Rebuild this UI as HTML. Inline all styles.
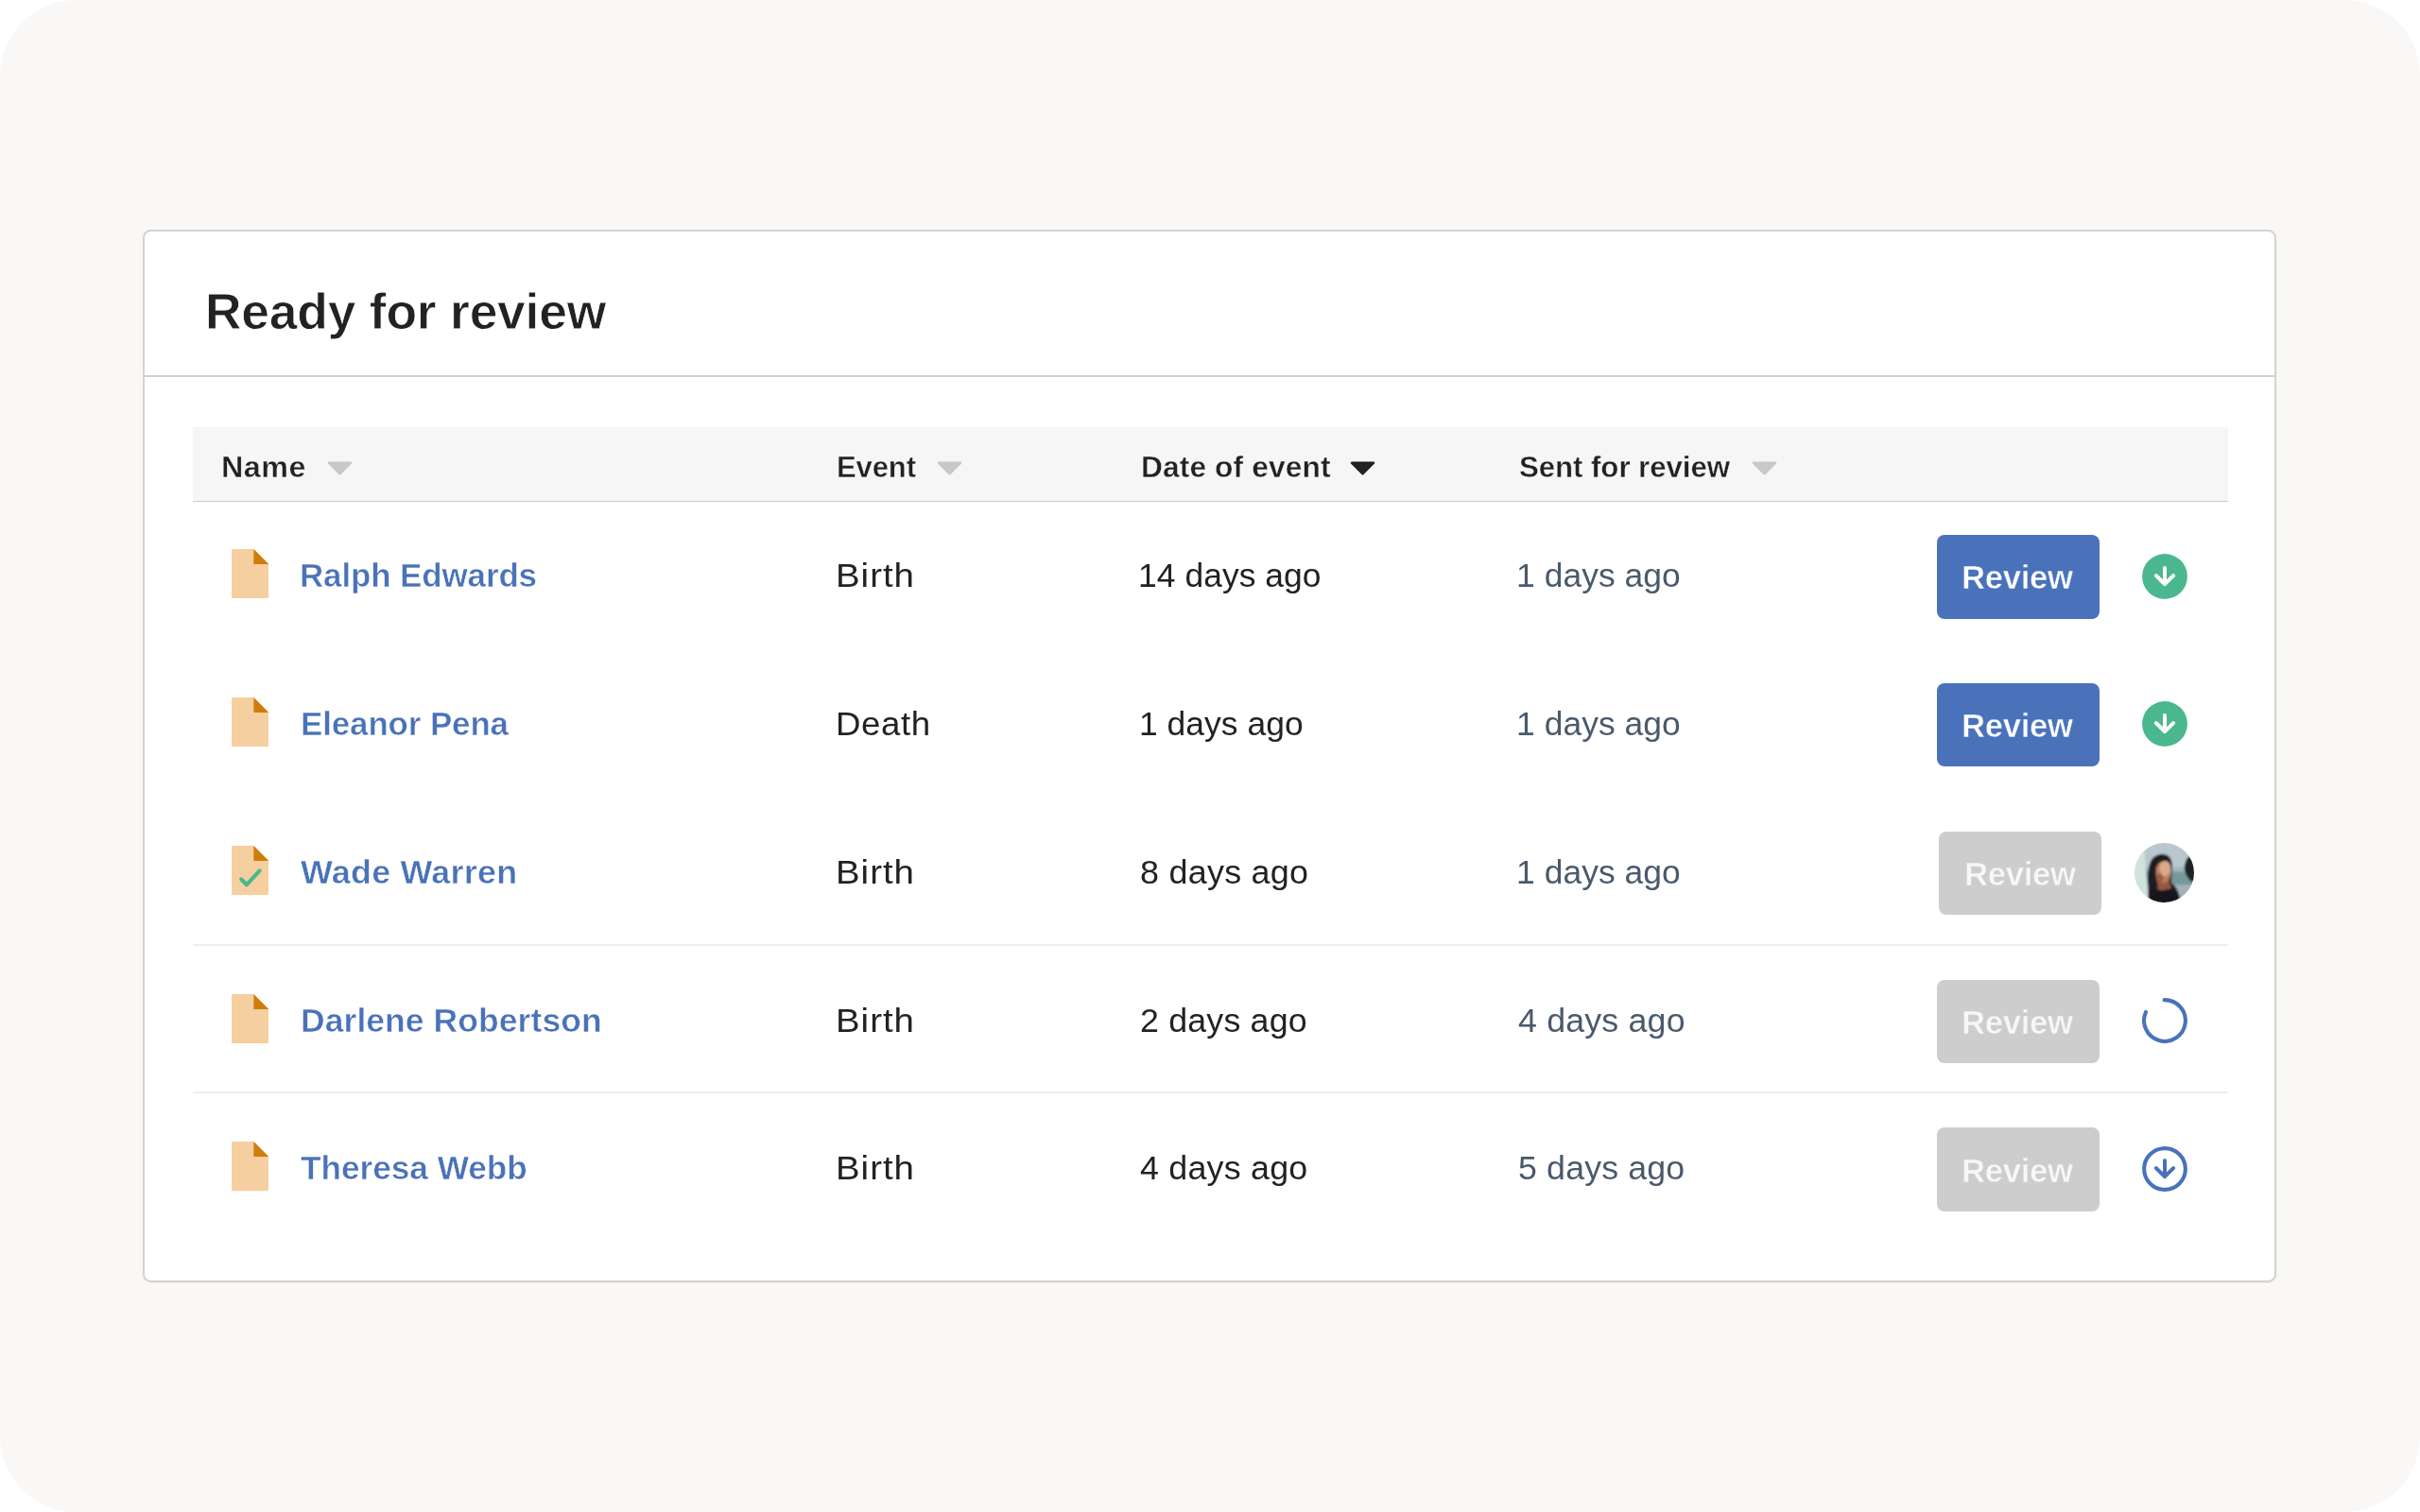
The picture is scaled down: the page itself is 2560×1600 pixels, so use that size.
<!DOCTYPE html>
<html lang="en">
<head>
<meta charset="utf-8">
<title>Ready for review</title>
<style>
  html, body { margin: 0; padding: 0; }
  body {
    width: 2560px; height: 1600px; overflow: hidden; background: #ffffff;
    font-family: "Liberation Sans", sans-serif; color: #222222;
  }
  .stage {
    position: absolute; left: 0; top: 0; width: 2560px; height: 1600px;
    background: #f9f8f6; border-radius: 80px;
  }
  .card {
    position: absolute; left: 151px; top: 242.6px; width: 2257px; height: 1114.7px; box-sizing: border-box;
    background: #ffffff; border: 2.1px solid #d3d3d1; border-radius: 8.5px;
    box-shadow: 0 1px 2px rgba(0,0,0,0.04);
  }
  .divider { position: absolute; left: 153px; top: 397.2px; width: 2253px; height: 2px; background: #d0d0d0; }
  .thead {
    position: absolute; left: 204px; top: 452.3px; width: 2152.5px; height: 77.6px;
    background: #f6f6f6; border-bottom: 1.2px solid #cdcdcd;
  }
  .rule { position: absolute; left: 204px; width: 2152.5px; height: 2px; background: #eeeeee; }
  .t { position: absolute; margin: 0; line-height: 1; white-space: nowrap; transform-origin: 0 50%; font-weight: 400; }
  .title { font-size: 54px; color: #222222; font-weight: 700; -webkit-text-stroke: 0.8px #ffffff; }
  .th { font-size: 31.5px; color: #222222; font-weight: 700; -webkit-text-stroke: 0.4px #f6f6f6; }
  .name { font-size: 35.3px; color: #4a72b8; font-weight: 700; -webkit-text-stroke: 0.5px #ffffff; }
  .ev, .dt { font-size: 35.3px; color: #222222; }
  .sent { font-size: 35.3px; color: #4a5a6b; }
  .btxt { font-size: 35.3px; color: #ffffff; font-weight: 700; -webkit-text-stroke: 0.5px #4972bb; }
  .btxt.off { color: #f7f7f7; -webkit-text-stroke-color: #cdcdcd; }
  .tri { position: absolute; top: 488px; width: 27px; height: 15px; }
  .doc { position: absolute; left: 244.7px; width: 39.2px; height: 52.2px; }
  .btn { position: absolute; left: 2048.7px; width: 172.3px; height: 88.7px; border-radius: 8px; background: #4972bb; }
  .btn.off { background: #cdcdcd; }
  .ico { position: absolute; left: 2265.9px; width: 48px; height: 48px; }
  .avatar { position: absolute; left: 2258.3px; width: 63px; height: 63px; }
</style>
</head>
<body>
<div class="stage">
  <div class="card"></div>
  <h1 class="t title" style="left:216.5px;top:301.9px;letter-spacing:-0.21px;transform:scaleX(0.9889)">Ready for review</h1>
  <div class="divider"></div>

  <div class="row head">
  <div class="thead"></div>
  <div class="t th" style="left:234.4px;top:479px;letter-spacing:0.46px;transform:scaleX(1.0253)">Name</div>
  <svg class="tri" style="left:346.3px" viewBox="0 0 27 15"><path d="M2 1.8h23L13.5 13.4z" fill="#c8c8c8" stroke="#c8c8c8" stroke-width="2.4" stroke-linejoin="round"/></svg>
  <div class="t th" style="left:884.6px;top:479px;letter-spacing:-0.17px;transform:scaleX(0.9877)">Event</div>
  <svg class="tri" style="left:990.6px" viewBox="0 0 27 15"><path d="M2 1.8h23L13.5 13.4z" fill="#c8c8c8" stroke="#c8c8c8" stroke-width="2.4" stroke-linejoin="round"/></svg>
  <div class="t th" style="left:1206.6px;top:479px;letter-spacing:0.09px;transform:scaleX(1.008)">Date of event</div>
  <svg class="tri" style="left:1428.4px" viewBox="0 0 27 15"><path d="M2 1.8h23L13.5 13.4z" fill="#222222" stroke="#222222" stroke-width="2.4" stroke-linejoin="round"/></svg>
  <div class="t th" style="left:1607.4px;top:479px;letter-spacing:-0.08px;transform:scaleX(0.9925)">Sent for review</div>
  <svg class="tri" style="left:1853.4px" viewBox="0 0 27 15"><path d="M2 1.8h23L13.5 13.4z" fill="#c8c8c8" stroke="#c8c8c8" stroke-width="2.4" stroke-linejoin="round"/></svg>
  </div>

  <div class="row"><!-- row 1: Ralph Edwards -->
  <svg class="doc" style="top:580.8px" viewBox="0 0 39.2 52.2"><path d="M1.5 0H23.4L39.2 16V50.7a1.5 1.5 0 0 1-1.5 1.5H1.5A1.5 1.5 0 0 1 0 50.7V1.5A1.5 1.5 0 0 1 1.5 0z" fill="#f5cf9f"/><path d="M23.4 0L39.2 16H23.4z" fill="#d07c0b"/></svg>
  <div class="t name" style="left:317.2px;top:590.9px;letter-spacing:-0.13px;transform:scaleX(0.9907)">Ralph Edwards</div>
  <div class="t ev" style="left:883.7px;top:590.9px;letter-spacing:0.91px;transform:scaleX(1.0887)">Birth</div>
  <div class="t dt" style="left:1204.1px;top:590.9px;letter-spacing:0.05px;transform:scaleX(1.0038)">14 days ago</div>
  <div class="t sent" style="left:1603.6px;top:590.9px;letter-spacing:0.05px;transform:scaleX(1.0039)">1 days ago</div>
  <div class="btn" style="top:565.9px"></div>
  <div class="t btxt" style="left:2075.4px;top:593.1px;letter-spacing:-0.3px;transform:scaleX(0.9815)">Review</div>
  <svg class="ico" style="top:585.5px" viewBox="0 0 48 48"><circle cx="24" cy="24" r="23.9" fill="#4bb78f"/><path d="M24 14.9V32.2M14.9 23.1L24 32.2L33.1 23.1" fill="none" stroke="#ffffff" stroke-width="4" stroke-linecap="round" stroke-linejoin="round"/></svg>
  </div>
  <div class="row"><!-- row 2: Eleanor Pena -->
  <svg class="doc" style="top:737.7px" viewBox="0 0 39.2 52.2"><path d="M1.5 0H23.4L39.2 16V50.7a1.5 1.5 0 0 1-1.5 1.5H1.5A1.5 1.5 0 0 1 0 50.7V1.5A1.5 1.5 0 0 1 1.5 0z" fill="#f5cf9f"/><path d="M23.4 0L39.2 16H23.4z" fill="#d07c0b"/></svg>
  <div class="t name" style="left:317.6px;top:747.8px;letter-spacing:-0.13px;transform:scaleX(0.9903)">Eleanor Pena</div>
  <div class="t ev" style="left:884.3px;top:747.8px;letter-spacing:0.56px;transform:scaleX(1.0391)">Death</div>
  <div class="t dt" style="left:1204.8px;top:747.8px;letter-spacing:0.04px;transform:scaleX(1.0036)">1 days ago</div>
  <div class="t sent" style="left:1603.6px;top:747.8px;letter-spacing:0.05px;transform:scaleX(1.0039)">1 days ago</div>
  <div class="btn" style="top:722.77px"></div>
  <div class="t btxt" style="left:2075.4px;top:750px;letter-spacing:-0.3px;transform:scaleX(0.9815)">Review</div>
  <svg class="ico" style="top:742.33px" viewBox="0 0 48 48"><circle cx="24" cy="24" r="23.9" fill="#4bb78f"/><path d="M24 14.9V32.2M14.9 23.1L24 32.2L33.1 23.1" fill="none" stroke="#ffffff" stroke-width="4" stroke-linecap="round" stroke-linejoin="round"/></svg>
  </div>
  <div class="row"><!-- row 3: Wade Warren -->
  <svg class="doc" style="top:894.6px" viewBox="0 0 39.2 52.2"><path d="M1.5 0H23.4L39.2 16V50.7a1.5 1.5 0 0 1-1.5 1.5H1.5A1.5 1.5 0 0 1 0 50.7V1.5A1.5 1.5 0 0 1 1.5 0z" fill="#f5cf9f"/><path d="M23.4 0L39.2 16H23.4z" fill="#d07c0b"/><path d="M10.4 35.6L16 41.2L29.6 26.4" fill="none" stroke="#4bb78f" stroke-width="4.2" stroke-linecap="round" stroke-linejoin="round"/></svg>
  <div class="t name" style="left:317.6px;top:904.6px;letter-spacing:0.24px;transform:scaleX(1.0166)">Wade Warren</div>
  <div class="t ev" style="left:883.7px;top:904.6px;letter-spacing:0.91px;transform:scaleX(1.0887)">Birth</div>
  <div class="t dt" style="left:1206px;top:904.6px;letter-spacing:0.23px;transform:scaleX(1.0188)">8 days ago</div>
  <div class="t sent" style="left:1603.6px;top:904.6px;letter-spacing:0.05px;transform:scaleX(1.0039)">1 days ago</div>
  <div class="btn off" style="left:2051.1px;top:879.64px"></div>
  <div class="t btxt off" style="left:2077.8px;top:906.8px;letter-spacing:-0.3px;transform:scaleX(0.9815)">Review</div>
  <svg class="avatar" style="top:891.6px" viewBox="0 0 64 64">
    <defs><clipPath id="avc"><circle cx="32" cy="32" r="32"/></clipPath><filter id="avb" x="-10%" y="-10%" width="120%" height="120%"><feGaussianBlur stdDeviation="1.2"/></filter></defs>
    <g clip-path="url(#avc)"><g filter="url(#avb)">
      <rect x="-4" y="-4" width="72" height="72" fill="#bac7cf"/>
      <rect x="-4" y="26" width="72" height="8" fill="#a3b7be"/>
      <rect x="-4" y="31" width="72" height="16" fill="#76989b"/>
      <rect x="-4" y="45" width="72" height="24" fill="#a5b1b9"/>
      <path d="M-4 -4H9.5L15.5 68H-4z" fill="#cfe3dc"/>
      <path d="M53.5 27C54 20 56.5 15.5 59 14.5L68 13V43L60 41C57 37 54 33 53.5 27z" fill="#1a2226"/>
      <path d="M15 68L14.8 47C13.5 36 14.5 23 19 17C24 11 33 10.5 37 14.5C40.5 18 41 24 40.3 30L39.5 43C44 46 47 51 48.5 58L50 68z" fill="#1c1d20"/>
      <path d="M24.5 40L37 40L39.5 49L25 52z" fill="#95593f"/>
      <ellipse cx="31.2" cy="31" rx="8.3" ry="12.2" fill="#b97b5d"/>
      <ellipse cx="32.8" cy="27.5" rx="6" ry="8.2" fill="#dca98a"/>
      <ellipse cx="27" cy="38" rx="3.6" ry="5" fill="#9b5b42"/>
      <path d="M15 68L15 51C20 48.5 26 49.5 31 52C37 48 43.5 50 48.5 58L50 68z" fill="#15181a"/>
      <path d="M22 22C25 16 33 15 38 20C34 18.5 27 19 22 26z" fill="#1c1d20"/>
    </g></g></svg>
  </div>
  <div class="row"><!-- row 4: Darlene Robertson -->
  <div class="rule" style="top:999px"></div>
  <svg class="doc" style="top:1051.5px" viewBox="0 0 39.2 52.2"><path d="M1.5 0H23.4L39.2 16V50.7a1.5 1.5 0 0 1-1.5 1.5H1.5A1.5 1.5 0 0 1 0 50.7V1.5A1.5 1.5 0 0 1 1.5 0z" fill="#f5cf9f"/><path d="M23.4 0L39.2 16H23.4z" fill="#d07c0b"/></svg>
  <div class="t name" style="left:317.6px;top:1061.5px;letter-spacing:0.07px;transform:scaleX(1.0054)">Darlene Robertson</div>
  <div class="t ev" style="left:883.7px;top:1061.5px;letter-spacing:0.91px;transform:scaleX(1.0887)">Birth</div>
  <div class="t dt" style="left:1206px;top:1061.5px;letter-spacing:0.17px;transform:scaleX(1.0138)">2 days ago</div>
  <div class="t sent" style="left:1605.5px;top:1061.5px;letter-spacing:0.17px;transform:scaleX(1.0134)">4 days ago</div>
  <div class="btn off" style="top:1036.51px"></div>
  <div class="t btxt off" style="left:2075.4px;top:1063.7px;letter-spacing:-0.3px;transform:scaleX(0.9815)">Review</div>
  <svg class="ico" style="top:1055.99px" viewBox="0 0 48 48"><path d="M23.6 2.1A21.9 21.9 0 1 1 4 15" fill="none" stroke="#4972bb" stroke-width="4.1" stroke-linecap="round"/></svg>
  </div>
  <div class="row"><!-- row 5: Theresa Webb -->
  <div class="rule" style="top:1155px"></div>
  <svg class="doc" style="top:1208.4px" viewBox="0 0 39.2 52.2"><path d="M1.5 0H23.4L39.2 16V50.7a1.5 1.5 0 0 1-1.5 1.5H1.5A1.5 1.5 0 0 1 0 50.7V1.5A1.5 1.5 0 0 1 1.5 0z" fill="#f5cf9f"/><path d="M23.4 0L39.2 16H23.4z" fill="#d07c0b"/></svg>
  <div class="t name" style="left:317.6px;top:1218.3px;letter-spacing:-0.03px;transform:scaleX(0.9982)">Theresa Webb</div>
  <div class="t ev" style="left:883.7px;top:1218.3px;letter-spacing:0.91px;transform:scaleX(1.0887)">Birth</div>
  <div class="t dt" style="left:1206.2px;top:1218.3px;letter-spacing:0.2px;transform:scaleX(1.0159)">4 days ago</div>
  <div class="t sent" style="left:1605.8px;top:1218.3px;letter-spacing:0.15px;transform:scaleX(1.0124)">5 days ago</div>
  <div class="btn off" style="top:1193.38px"></div>
  <div class="t btxt off" style="left:2075.4px;top:1220.5px;letter-spacing:-0.3px;transform:scaleX(0.9815)">Review</div>
  <svg class="ico" style="top:1212.82px" viewBox="0 0 48 48"><circle cx="24" cy="24" r="21.85" fill="none" stroke="#4972bb" stroke-width="4.1"/><path d="M24 14.9V32.2M14.9 23.1L24 32.2L33.1 23.1" fill="none" stroke="#4972bb" stroke-width="4" stroke-linecap="round" stroke-linejoin="round"/></svg>
  </div>
</div>
</body>
</html>
